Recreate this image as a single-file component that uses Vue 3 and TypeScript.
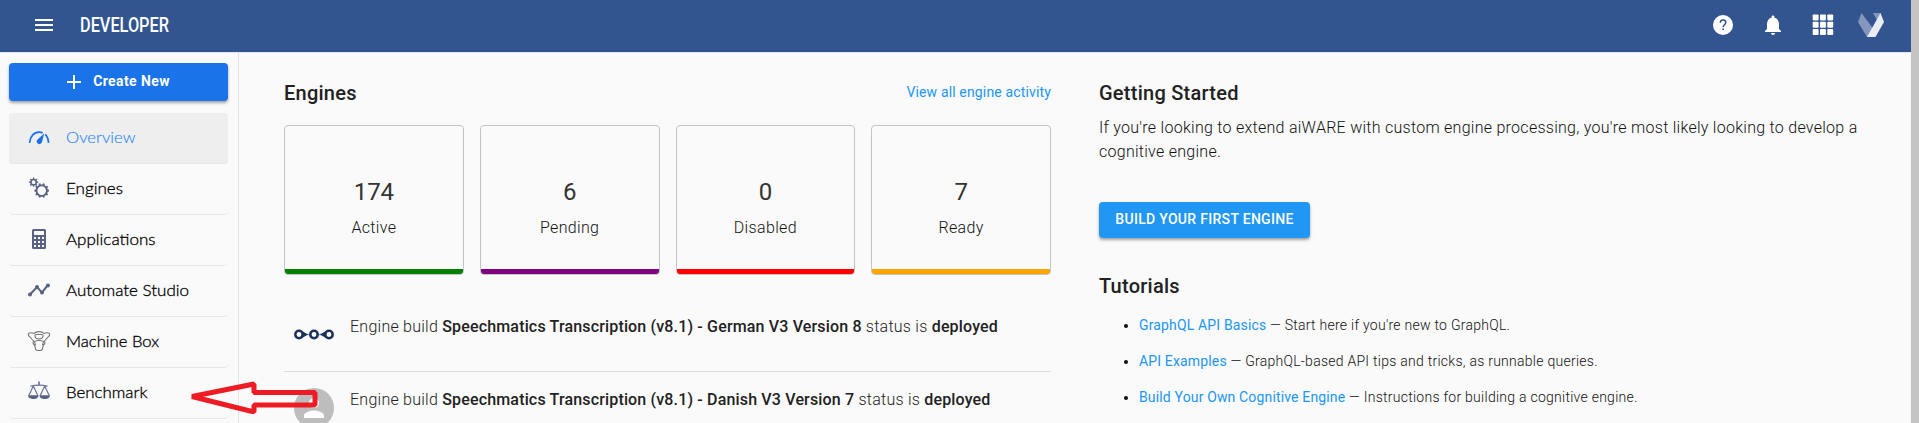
<script setup lang="ts">
interface NavItem { label: string; icon: string; width: number }
interface Stat { value: number; label: string; tone: string }
interface Build { name: string; logo: boolean }
interface Tutorial { title: string; text: string }

const nav: NavItem[] = [
  { label: 'Overview', icon: 'gauge', width: 69.5 },
  { label: 'Engines', icon: 'gears', width: 57 },
  { label: 'Applications', icon: 'calc', width: 89.5 },
  { label: 'Automate Studio', icon: 'trend', width: 123 },
  { label: 'Machine Box', icon: 'box', width: 93 },
  { label: 'Benchmark', icon: 'scales', width: 81.5 },
]
const stats: Stat[] = [
  { value: 174, label: 'Active', tone: 'green' },
  { value: 6, label: 'Pending', tone: 'purple' },
  { value: 0, label: 'Disabled', tone: 'red' },
  { value: 7, label: 'Ready', tone: 'orange' },
]
const builds: Build[] = [
  { name: 'Speechmatics Transcription (v8.1) - German V3 Version 8', logo: true },
  { name: 'Speechmatics Transcription (v8.1) - Danish V3 Version 7', logo: false },
]
const tutorials: Tutorial[] = [
  { title: 'GraphQL API Basics', text: "Start here if you're new to GraphQL." },
  { title: 'API Examples', text: 'GraphQL-based API tips and tricks, as runnable queries.' },
  { title: 'Build Your Own Cognitive Engine', text: 'Instructions for building a cognitive engine.' },
]

// Outline of a cog with square teeth, centred on (cx, cy)
function cog(cx: number, cy: number, outer: number, inner: number, teeth: number): string {
  const step = (Math.PI * 2) / teeth
  const pts: string[] = []
  for (let i = 0; i < teeth; i++) {
    const a = i * step
    for (const [d, r] of [[-0.28, inner], [-0.17, outer], [0.17, outer], [0.28, inner]]) {
      pts.push(`${(cx + Math.cos(a + d * step) * r).toFixed(2)} ${(cy + Math.sin(a + d * step) * r).toFixed(2)}`)
    }
  }
  return `M${pts.join('L')}Z`
}
function hole(cx: number, cy: number, r: number): string {
  return `M${cx - r} ${cy}a${r} ${r} 0 1 0 ${2 * r} 0a${r} ${r} 0 1 0 ${-2 * r} 0Z`
}
const gears = cog(13.7, 13.6, 7.4, 6.2, 10) + hole(13.7, 13.6, 4.3) + cog(5.6, 5.2, 4.7, 3.5, 8) + hole(5.6, 5.2, 1.9)
</script>

<template>
  <div class="app">
    <div class="page">
      <header class="topbar">
        <svg class="menu" width="18" height="12" viewBox="0 0 18 12"><path d="M0 0h18v2H0zM0 5h18v2H0zM0 10h18v2H0z" fill="#fff" /></svg>
        <svg class="brand" width="92" height="30"><text x="0" y="22" textLength="89" lengthAdjust="spacingAndGlyphs">DEVELOPER</text></svg>
        <div class="tools">
          <svg width="24" height="24" viewBox="0 0 24 24"><circle cx="12" cy="12" r="10" fill="#fff" /><path d="M9.300 9.800c0-1.700 1.200-2.700 2.800-2.700s2.700 1 2.700 2.400c0 2.200-2.700 2.300-2.700 4.700" fill="none" stroke="#325590" stroke-width="1.500" /><path d="M11.300 15.500h1.600v1.600h-1.600z" fill="#325590" /></svg>
          <svg width="24" height="24" viewBox="0 0 24 24" fill="#fff"><path d="M12 22c1.100 0 2-.9 2-2h-4c0 1.100.9 2 2 2zm6-6v-5c0-3.070-1.640-5.640-4.500-6.320V4c0-.83-.67-1.500-1.500-1.500s-1.500.67-1.500 1.500v.68C7.630 5.360 6 7.920 6 11v5l-2 2v1h16v-1l-2-2z" /></svg>
          <svg width="22" height="22" viewBox="0 0 22 22" fill="#fff">
            <template v-for="r in 3" :key="r"><rect v-for="c in 3" :key="c" :x="c * 7.3 - 6.600" :y="r * 7.300 - 6.800" width="5.900" height="5.900" rx="0.8" /></template>
          </svg>
          <svg width="28" height="26" viewBox="0 0 28 26"><path d="M4.500 1L1 10l9 15h4l4-6z" fill="#8496bd" /><path d="M16 1h8l-4 7z" fill="#8496bd" /><path d="M23.500 1L27 10l-8.500 15H10z" fill="#e9ecf3" /></svg>
        </div>
      </header>

      <div class="body">
        <aside class="side">
          <button class="create">
            <svg width="14" height="14" viewBox="0 0 14 14"><path d="M6 0h2v6h6v2H8v6H6V8H0V6h6z" fill="#fff" /></svg>
            <span>Create New</span>
          </button>
          <nav>
            <a v-for="n in nav" :key="n.label" class="item" :class="{ active: n.icon === 'gauge' }">
              <svg class="ico" width="24" height="24" viewBox="0 0 24 24">
                <g v-if="n.icon === 'gauge'" fill="none" stroke="#1b6fe8" stroke-width="1.700">
                  <path d="M2.600 17.900C3 11.500 7 7.200 12 7.200c1.400 0 2.600.2 3.600.7M18.300 9.400c1.900 1.900 3 4.600 3.300 8.500" />
                  <path d="M17.300 8.200L15 17a2.700 2.700 0 1 1-4.700-2.300z" fill="#1b6fe8" stroke="none" />
                </g>
                <path v-else-if="n.icon === 'gears'" :d="gears" fill="#586282" fill-rule="evenodd" transform="translate(1 1)" />
                <path v-else-if="n.icon === 'calc'" fill="#586282" fill-rule="evenodd" d="M6.500 2h11a1.500 1.500 0 0 1 1.500 1.500v17a1.500 1.500 0 0 1-1.500 1.500h-11A1.500 1.500 0 0 1 5 20.500v-17A1.500 1.500 0 0 1 6.500 2zM7 4v4h10V4zM7 10v2h2v-2zM11 10v2h2v-2zM15 10v2h2v-2zM7 14v2h2v-2zM11 14v2h2v-2zM15 14v2h2v-2zM7 18v2h2v-2zM11 18v2h2v-2zM15 18v2h2v-2z" />
                <g v-else-if="n.icon === 'trend'" fill="#586282">
                  <path d="M3 16.500l7-7.500 5 5.700 6-8" fill="none" stroke="#586282" stroke-width="2" />
                  <circle cx="3" cy="16.500" r="2" /><circle cx="10" cy="9" r="2" /><circle cx="15" cy="14.500" r="2" /><circle cx="21" cy="7.500" r="2" />
                </g>
                <g v-else-if="n.icon === 'box'" fill="none" stroke="#777" stroke-width="1.100">
                  <path d="M7 4.500C9 2 15 2 17 4.500c2-1 4-.9 5.500-.2.400 1.200.3 2-.4 2.700L17 12.500l-5-1.300-5 1.300L1.900 7c-.7-.7-.8-1.500-.4-2.700C3 3.600 5 3.500 7 4.500z" />
                  <path d="M9.500 5.500h5c1.300 0 1.800.8 1.500 2-.4 1.800-1.700 2.500-4 2.500s-3.600-.7-4-2.500c-.3-1.200.2-2 1.500-2zM7 12.500c-1.300.6-1.300 2.600.4 3.300.6 1.600 1 3 1.300 4.700l1.300 1h4l1.300-1c.3-1.700.7-3.100 1.300-4.700 1.700-.7 1.700-2.700.4-3.300M7.400 12.300l1.200 4M16.600 12.300l-1.200 4" />
                </g>
                <g v-else fill="none" stroke="#6b7594" stroke-width="1.200">
                  <path d="M3.500 6.200q4-1 8.500-1t8.500 1M6.300 6L1.800 15.500M6.300 6l4.500 9.500M17.700 6l-4.500 9.500M17.700 6l4.500 9.500" />
                  <path d="M12 1.500v4" stroke-width="1.700" />
                  <path d="M1 15.300h10.600c-.5 3.200-2.500 3.700-5.300 3.700s-4.800-.5-5.300-3.700zM12.400 15.300H23c-.5 3.200-2.500 3.700-5.300 3.700s-4.800-.5-5.300-3.700z" fill="#586282" stroke="none" />
                </g>
              </svg>
              <svg class="label" width="150" height="30"><text x="0" y="20.500" :textLength="n.width" lengthAdjust="spacingAndGlyphs">{{ n.label }}</text></svg>
            </a>
          </nav>
        </aside>

        <main class="engines">
          <div class="head"><h2>Engines</h2><a class="link">View all engine activity</a></div>
          <div class="stats">
            <div v-for="s in stats" :key="s.label" class="stat" :class="s.tone">
              <div class="num">{{ s.value }}</div>
              <div class="cap">{{ s.label }}</div>
            </div>
          </div>
          <div v-for="b in builds" :key="b.name" class="build">
            <svg class="avatar" width="40" height="40" viewBox="0 0 40 40">
              <g v-if="b.logo" fill="#fff" stroke="#1b3157" stroke-width="2.500">
                <path d="M9 19.500h22" stroke="#6db5ae" stroke-width="1.500" />
                <path d="M8 16l6 3.500-6 3.500zM32 16l-6 3.500 6 3.500z" fill="#1b3157" stroke="none" />
                <circle cx="5" cy="19.500" r="3.700" /><circle cx="20" cy="19.500" r="3.700" /><circle cx="35" cy="19.500" r="3.700" />
              </g>
              <g v-else fill="#fff"><circle cx="20" cy="20" r="20" fill="#bdbdbd" /><circle cx="20" cy="15" r="5" /><path d="M10 30v-2.500c0-3.300 6.700-5 10-5s10 1.700 10 5V30z" /></g>
            </svg>
            <p>Engine build <b>{{ b.name }}</b> status is <b>deployed</b></p>
          </div>
        </main>

        <section class="start">
          <h2>Getting Started</h2>
          <p class="intro">If you're looking to extend aiWARE with custom engine processing, you're most likely looking to develop a cognitive engine.</p>
          <button class="cta">BUILD YOUR FIRST ENGINE</button>
          <h2>Tutorials</h2>
          <ul>
            <li v-for="t in tutorials" :key="t.title"><a class="link">{{ t.title }}</a> — {{ t.text }}</li>
          </ul>
        </section>
      </div>
    </div>
    <div class="scroll"></div>
    <svg class="arrow" width="132" height="34" viewBox="0 0 132 34"><path d="M6 16.500L68 4v8.500h61V25H68v7z" fill="none" stroke="#ed1c24" stroke-width="5" stroke-linejoin="bevel" /></svg>
  </div>
</template>

<style>
body { margin: 0; background: #fafafa; }
</style>
<style scoped>
.app { position: relative; display: flex; height: 423px; overflow: hidden; background: #fafafa; font-family: Roboto, "Liberation Sans", sans-serif; color: #212121; }
.page { flex: 1; display: flex; flex-direction: column; min-width: 0; }
.scroll { width: 8px; background: #c4c4c4; }
.topbar { box-sizing: border-box; flex: none; height: 53px; display: flex; align-items: center; padding: 0 26px 2px 35px; background: #325590; border-bottom: 1px solid #dfe3ec; }
.brand { margin-left: 27px; overflow: visible; }
.brand text { font: 500 19.500px Roboto, sans-serif; fill: #fff; }
.tools { margin-left: auto; display: flex; align-items: center; }
.tools svg:nth-child(2) { margin-left: 26px; }
.tools svg:nth-child(3) { margin-left: 27px; }
.tools svg:nth-child(4) { margin-left: 23px; }
.body { flex: 1; display: flex; min-height: 0; }
.side { box-sizing: border-box; flex: none; width: 239px; padding: 10px 10px 0 9px; border-right: 1px solid #e4e4e4; }
button { border: 0; font-family: inherit; color: #fff; display: flex; align-items: center; justify-content: center; }
.create { width: 219px; height: 38px; border-radius: 4px; padding: 0 0 2px 0; background: #1a73e8; font-size: 14px; font-weight: 700; letter-spacing: .4px; gap: 12px; box-shadow: 0 2px 3px rgba(0,0,0,.35); }
.create svg { margin-top: 2px; }
nav { margin-top: 12px; }
.item { box-sizing: border-box; display: flex; align-items: center; height: 51px; padding: 0 0 2px 18px; border-bottom: 1px solid #e6e6e6; border-radius: 4px; }
.item.active { background: #eee; }
.label { margin-left: 15px; }
.label text { font: 300 16px Lato, "Open Sans", sans-serif; fill: #000; stroke: #000; stroke-width: .3px; }
.active .label text { fill: #2c8af4; stroke: #2c8af4; stroke-width: .15px; }
h2 { margin: 0; font-size: 20px; line-height: 24px; font-weight: 500; letter-spacing: .25px; }
.link { color: #2196f3; font-size: 14px; font-weight: 400; letter-spacing: .15px; }
.engines { flex: none; width: 767px; margin-left: 45px; padding-top: 28px; }
.head { display: flex; justify-content: space-between; height: 44px; }
.head .link { line-height: 23px; }
.stats { display: grid; grid-template-columns: repeat(4, 1fr); gap: 16px; margin-bottom: 40px; }
.stat { box-sizing: border-box; height: 150px; border: 1px solid #c4c4c4; border-radius: 4px; text-align: center; padding-top: 49px; overflow: hidden; }
.stat::after { content: ""; display: block; height: 5px; margin-top: 26px; background: var(--tone); }
.green { --tone: #008000; }
.purple { --tone: #800080; }
.red { --tone: #f00; }
.orange { --tone: orange; }
.num { font-size: 24px; line-height: 34px; font-weight: 400; color: #333; }
.cap { font-size: 16px; line-height: 30px; padding-top: 4px; font-weight: 300; letter-spacing: .35px; color: #111; }
.build { box-sizing: border-box; display: flex; height: 57px; padding-left: 10px; border-bottom: 1px solid #dcdcdc; }
.build + .build { height: 73px; padding-top: 16px; }
.build .avatar { margin-right: 16px; }
.build p { margin: 0; font-size: 16px; line-height: 24px; font-weight: 300; letter-spacing: .25px; }
.build b { font-weight: 500; letter-spacing: .16px; }
.start { flex: none; width: 765px; margin-left: 48px; padding-top: 28px; }
.intro { margin: 11px 0 38px; font-size: 16px; line-height: 24px; font-weight: 300; letter-spacing: .27px; color: #111; }
.cta { width: 211px; height: 36px; margin-bottom: 36px; padding: 0 0 2px; border-radius: 4px; background: #2196f3; font-size: 14px; font-weight: 500; letter-spacing: .3px; box-shadow: 0 2px 3px rgba(0,0,0,.35); }
ul { margin: 9px 0 0; padding-left: 40px; }
li { height: 36px; line-height: 36px; font-size: 14px; font-weight: 300; letter-spacing: .26px; color: #111; }
.arrow { position: absolute; left: 186px; top: 380px; }
</style>
